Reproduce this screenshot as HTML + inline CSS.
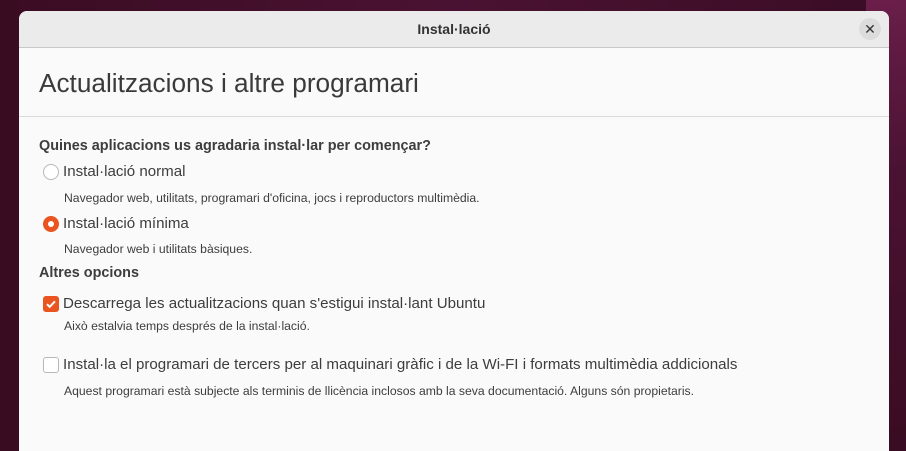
<!DOCTYPE html>
<html><head><meta charset="utf-8"><style>
body{margin:0;width:906px;height:436px;overflow:hidden;background:linear-gradient(90deg,#3a0c22 0%,#4a1232 50%,#3a0c24 100%);font-family:"Liberation Sans",sans-serif;color:#3d3d3d;position:relative}
.corner{position:absolute;right:0;top:0;width:40px;height:436px;background:linear-gradient(165deg,#6b1f4a 0%,#4a1232 40%,#3a0c22 100%)}
.win{position:absolute;left:19px;top:11px;width:870px;height:440px;background:#fafafa;border-radius:8px 8px 0 0;overflow:hidden}
.tb{height:36px;background:#ebebeb;border-bottom:1px solid #c8c8c8;text-align:center;line-height:37px;font-weight:bold;font-size:14px;color:#333}
.close{position:absolute;right:8px;top:7px;width:22px;height:22px;border-radius:50%;background:#dcdcdc;text-align:center;line-height:22px;font-size:14px;color:#333}
.hd{height:68px;border-bottom:1px solid #dadada}
.hd h1{margin:0;font-weight:normal;font-size:26.2px;position:absolute;left:20px;top:57px;color:#3a3a3a}
.t{position:absolute;white-space:nowrap}
.b{font-weight:bold;font-size:14.4px}
.l{font-size:15.1px}
.d{font-size:12.2px}
.radio{position:absolute;width:14px;height:14px;border-radius:50%;border:1px solid #b8b8b8;background:#fff}
.radio.on{background:#e95420;border-color:#e95420}
.radio.on:after{content:"";position:absolute;left:4px;top:4px;width:6px;height:6px;border-radius:50%;background:#fff}
.cb{position:absolute;width:14px;height:14px;border-radius:3px;border:1px solid #b8b8b8;background:#fff}
.cb.on{background:#e95420;border-color:#e95420}
</style></head><body>
<div class="corner"></div>
<div class="win">
<div class="tb">Instal·lació</div>
<div class="close">✕</div>
<div class="hd"><h1>Actualitzacions i altre programari</h1></div>
<div class="t b" style="left:20px;top:127px">Quines aplicacions us agradaria instal·lar per començar?</div>
<div class="radio" style="left:24px;top:153px"></div>
<div class="t l" style="left:44px;top:152px">Instal·lació normal</div>
<div class="t d" style="left:45px;top:180px">Navegador web, utilitats, programari d'oficina, jocs i reproductors multimèdia.</div>
<div class="radio on" style="left:24px;top:205px"></div>
<div class="t l" style="left:44px;top:204px">Instal·lació mínima</div>
<div class="t d" style="left:45px;top:231px">Navegador web i utilitats bàsiques.</div>
<div class="t b" style="left:20px;top:254px">Altres opcions</div>
<div class="cb on" style="left:24px;top:285px"><svg width="14" height="14" viewBox="0 0 14 14"><path d="M3 7.2l2.7 2.6L11 4.3" stroke="#fff" stroke-width="2" fill="none"/></svg></div>
<div class="t l" style="left:44px;top:284px">Descarrega les actualitzacions quan s'estigui instal·lant Ubuntu</div>
<div class="t d" style="left:45px;top:308px">Això estalvia temps després de la instal·lació.</div>
<div class="cb" style="left:24px;top:346px"></div>
<div class="t l" style="left:44px;top:345px">Instal·la el programari de tercers per al maquinari gràfic i de la Wi-FI i formats multimèdia addicionals</div>
<div class="t d" style="left:45px;top:373px">Aquest programari està subjecte als terminis de llicència inclosos amb la seva documentació. Alguns són propietaris.</div>
</div>
</body></html>
